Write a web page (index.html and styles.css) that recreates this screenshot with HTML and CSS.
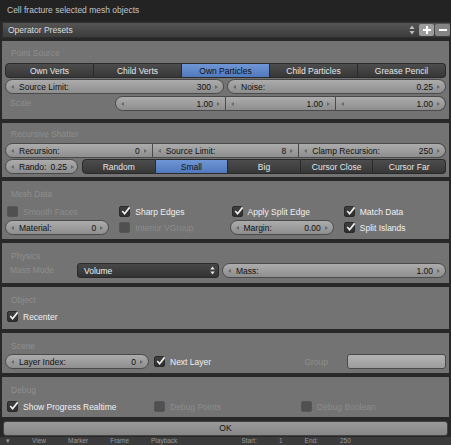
FILE: index.html
```html
<!DOCTYPE html>
<html>
<head>
<meta charset="utf-8">
<link rel="stylesheet" href="styles.css">
</head>
<body>
<div class="title">Cell fracture selected mesh objects</div>
<div class="presets">
  <span class="plbl">Operator Presets</span>
  <svg class="updown" width="6" height="10" viewBox="0 0 6 10"><path d="M3 0.5 L5.5 4 L0.5 4 Z M3 9.5 L5.5 6 L0.5 6 Z" fill="#bdbdbd"/></svg>
  <span class="pbtn plus"><svg width="10" height="10" viewBox="0 0 10 10"><path d="M5 1 V9 M1 5 H9" stroke="#fff" stroke-width="2"/></svg></span>
  <span class="pbtn minus"><svg width="10" height="10" viewBox="0 0 10 10"><path d="M1 5 H9" stroke="#fff" stroke-width="2"/></svg></span>
</div>

<div class="panels">
  <section class="panel p1">
    <div class="ph">Point Source</div>
    <div class="row seg">
      <div class="tb">Own Verts</div>
      <div class="tb">Child Verts</div>
      <div class="tb sel">Own Particles</div>
      <div class="tb">Child Particles</div>
      <div class="tb">Grease Pencil</div>
    </div>
    <div class="row split r2">
      <div class="num"><i class="al"></i><span class="nl">Source Limit:</span><span class="nv">300</span><i class="ar"></i></div>
      <div class="num"><i class="al"></i><span class="nl">Noise:</span><span class="nv">0.25</span><i class="ar"></i></div>
    </div>
    <div class="row r3">
      <div class="lbl scale">Scale</div>
      <div class="grp">
        <div class="num"><i class="al"></i><span class="nv">1.00</span><i class="ar"></i></div>
        <div class="num"><i class="al"></i><span class="nv">1.00</span><i class="ar"></i></div>
        <div class="num"><i class="al"></i><span class="nv">1.00</span><i class="ar"></i></div>
      </div>
    </div>
  </section>

  <section class="panel p2">
    <div class="ph">Recursive Shatter</div>
    <div class="row grp">
      <div class="num"><i class="al"></i><span class="nl">Recursion:</span><span class="nv">0</span><i class="ar"></i></div>
      <div class="num"><i class="al"></i><span class="nl">Source Limit:</span><span class="nv">8</span><i class="ar"></i></div>
      <div class="num"><i class="al"></i><span class="nl">Clamp Recursion:</span><span class="nv">250</span><i class="ar"></i></div>
    </div>
    <div class="row r2b">
      <div class="num rando"><i class="al"></i><span class="nl">Rando:</span><span class="nv rv">0.25</span><span class="fill"></span><i class="ar"></i></div>
      <div class="seg">
        <div class="tb">Random</div>
        <div class="tb sel">Small</div>
        <div class="tb">Big</div>
        <div class="tb">Cursor Close</div>
        <div class="tb">Cursor Far</div>
      </div>
    </div>
  </section>

  <section class="panel p3">
    <div class="ph">Mesh Data</div>
    <div class="row four">
      <div class="cb off"><i class="box"></i><span>Smooth Faces</span></div>
      <div class="cb"><i class="box"><svg viewBox="0 0 12 12"><path d="M2.5 5.5 L5 8.5 L10.5 1.5"/></svg></i><span>Sharp Edges</span></div>
      <div class="cb"><i class="box"><svg viewBox="0 0 12 12"><path d="M2.5 5.5 L5 8.5 L10.5 1.5"/></svg></i><span>Apply Split Edge</span></div>
      <div class="cb"><i class="box"><svg viewBox="0 0 12 12"><path d="M2.5 5.5 L5 8.5 L10.5 1.5"/></svg></i><span>Match Data</span></div>
    </div>
    <div class="row four r2c">
      <div class="num"><i class="al"></i><span class="nl">Material:</span><span class="nv">0</span><i class="ar"></i></div>
      <div class="cb off"><i class="box"></i><span>Interior VGroup</span></div>
      <div class="num"><i class="al"></i><span class="nl">Margin:</span><span class="nv">0.00</span><i class="ar"></i></div>
      <div class="cb"><i class="box"><svg viewBox="0 0 12 12"><path d="M2.5 5.5 L5 8.5 L10.5 1.5"/></svg></i><span>Split Islands</span></div>
    </div>
  </section>

  <section class="panel p4">
    <div class="ph">Physics</div>
    <div class="row split">
      <div class="half">
        <div class="lbl mm">Mass Mode</div>
        <div class="menu"><span>Volume</span><svg width="5" height="9" viewBox="0 0 5 9"><path d="M2.5 0.5 L4.8 3.5 L0.2 3.5 Z M2.5 8.5 L4.8 5.5 L0.2 5.5 Z" fill="#e0e0e0"/></svg></div>
      </div>
      <div class="num"><i class="al"></i><span class="nl">Mass:</span><span class="nv">1.00</span><i class="ar"></i></div>
    </div>
  </section>

  <section class="panel p5">
    <div class="ph">Object</div>
    <div class="row">
      <div class="cb"><i class="box"><svg viewBox="0 0 12 12"><path d="M2.5 5.5 L5 8.5 L10.5 1.5"/></svg></i><span>Recenter</span></div>
    </div>
  </section>

  <section class="panel p6">
    <div class="ph">Scene</div>
    <div class="row three">
      <div class="c3"><div class="num li"><i class="al"></i><span class="nl">Layer Index:</span><span class="nv">0</span><i class="ar"></i></div></div>
      <div class="c3"><div class="cb"><i class="box"><svg viewBox="0 0 12 12"><path d="M2.5 5.5 L5 8.5 L10.5 1.5"/></svg></i><span>Next Layer</span></div></div>
      <div class="c3 grpcol"><span class="lbl glbl">Group</span><div class="txt"></div></div>
    </div>
  </section>

  <section class="panel p7">
    <div class="ph">Debug</div>
    <div class="row three">
      <div class="c3"><div class="cb"><i class="box"><svg viewBox="0 0 12 12"><path d="M2.5 5.5 L5 8.5 L10.5 1.5"/></svg></i><span>Show Progress Realtime</span></div></div>
      <div class="c3"><div class="cb off"><i class="box"></i><span>Debug Points</span></div></div>
      <div class="c3"><div class="cb off"><i class="box"></i><span>Debug Boolean</span></div></div>
    </div>
  </section>
</div>

<div class="ok">OK</div>

<div class="timeline">
  <span class="ti">▾</span><span>View</span><span>Marker</span><span>Frame</span><span>Playback</span>
  <span class="gap"></span><span>Start:</span><span>1</span><span>End:</span><span>250</span>
</div>
</body>
</html>
```

FILE: styles.css
```css
* { box-sizing: border-box; margin: 0; padding: 0; }
html, body { width: 451px; height: 445px; overflow: hidden; }
body {
  background: #282828;
  font-family: "Liberation Sans", Arial, sans-serif;
  font-size: 8.5px;
  color: #e8e8e8;
}

.title {
  height: 21px;
  line-height: 21px;
  padding-left: 7px;
  color: #c4c4c4;
  background: #232323;
}

.presets {
  height: 16px;
  margin: 1px 0 0 2px;
  display: flex;
  align-items: center;
  background: linear-gradient(#555, #3c3c3c);
  border: 1px solid #2e2e2e;
  padding-left: 5px;
  color: #dcdcdc;
}
.plbl { flex: 1; }
.updown { margin-right: 4px; }
.pbtn {
  width: 15px;
  height: 12px;
  display: flex;
  align-items: center;
  justify-content: center;
  border-radius: 2px;
}
.plus { background: #9c9c9c; margin-right: 1px; }
.minus { background: #858585; }

.panels {
  margin: 3px 2px 0;
  display: flex;
  flex-direction: column;
  gap: 4px;
}
.panel {
  background: #737373;
  padding: 0 3px;
}
.ph {
  height: 21px;
  padding: 7px 0 0 6px;
  line-height: 12px;
  color: #8e8e8e;
}
.lbl { color: #8e8e8e; }

.row { display: flex; height: 15px; }

/* panel specific spacing */
.p1 .ph { height: 22px; padding-top: 6px; }
.p1 .r2 { margin-top: 1px; }
.p1 .r3 { margin-top: 2px; }
.p1 { padding-bottom: 8px; }
.p2 .ph { height: 20px; padding-top: 5px; }
.p2 .r2b { margin-top: 1px; }
.p2 { padding-bottom: 3px; }
.p3 .ph { height: 23px; }
.p3 .r2c { margin-top: 1px; }
.p3 { padding-bottom: 4px; }
.p4 .ph { height: 20px; }
.p4 { padding-bottom: 5px; }
.p5 .ph { height: 22px; }
.p5 { padding-bottom: 5px; }
.p6 .ph { height: 21px; }
.p6 { padding-bottom: 4px; }
.p7 .ph { height: 22px; }
.p7 { padding-bottom: 3px; }

/* segmented toggle buttons */
.seg { display: flex; flex: 1; height: 15px; }
.tb {
  flex: 1;
  display: flex;
  align-items: center;
  justify-content: center;
  background: linear-gradient(#4d4d4d, #373737);
  border: 1px solid #2a2a2a;
  border-left: none;
  color: #e6e6e6;
}
.tb:first-child { border-left: 1px solid #2a2a2a; border-radius: 4px 0 0 4px; }
.tb:last-child { border-radius: 0 4px 4px 0; }
.tb.sel { background: linear-gradient(#6f97d6, #5079bd); color: #111; }

/* number fields */
.num {
  flex: 1;
  display: flex;
  align-items: center;
  height: 15px;
  padding: 0 4px;
  background: linear-gradient(#acacac, #8e8e8e);
  border: 1px solid #4a4a4a;
  border-radius: 8px;
  color: #111;
  min-width: 0;
}
.nl { flex: 1; padding-left: 5px; white-space: nowrap; }
.nv { padding-right: 4px; }
.al, .ar { width: 0; height: 0; border-top: 2.5px solid transparent; border-bottom: 2.5px solid transparent; }
.al { border-right: 3px solid #6a6a6a; margin-left: 1px; }
.ar { border-left: 3px solid #6a6a6a; margin-right: 1px; }

.split { gap: 3px; }

.grp { display: flex; flex: 1; }
.grp .num { border-radius: 0; border-left: none; }
.grp .num:first-child { border-left: 1px solid #4a4a4a; border-radius: 8px 0 0 8px; }
.grp .num:last-child { border-radius: 0 8px 8px 0; }
.grp .nv { flex: 1; text-align: right; }
.grp .nl + .nv { flex: none; }

.scale { width: 110px; padding-left: 5px; line-height: 15px; }

.rando { flex: none; width: 73px; margin-right: 4px; }
.rando .nl { flex: none; }
.rando .rv { padding-left: 4px; }
.rando .fill { flex: 1; }

/* checkboxes */
.cb { display: flex; align-items: center; height: 15px; padding-left: 2px; white-space: nowrap; }
.cb .box {
  width: 11px;
  height: 11px;
  border-radius: 2px;
  background: linear-gradient(#3f3f3f, #2f2f2f);
  border: 1px solid #2a2a2a;
  margin-right: 5px;
  position: relative;
}
.cb .box svg {
  position: absolute;
  left: 0;
  top: -1px;
  width: 11px;
  height: 11px;
  fill: none;
  stroke: #f2f2f2;
  stroke-width: 1.8;
}
.cb span { color: #f0f0f0; }
.cb.off .box { background: #505050; border-color: #555; }
.cb.off span { color: #8c8c8c; }

.four { display: grid; grid-template-columns: repeat(4, 1fr); column-gap: 8px; }

.half { flex: 1; display: flex; }
.mm { width: 72px; padding-left: 5px; line-height: 15px; }
.menu {
  flex: 1;
  display: flex;
  align-items: center;
  padding: 0 3px 0 6px;
  background: linear-gradient(#474747, #333);
  border: 1px solid #2a2a2a;
  border-radius: 3px;
  color: #f0f0f0;
}
.menu span { flex: 1; }

.three { display: grid; grid-template-columns: repeat(3, 1fr); }
.c3 { display: flex; min-width: 0; }
.li { margin-right: 3px; }
.grpcol { align-items: center; }
.glbl { width: 48px; text-align: right; padding-right: 19px; }
.txt {
  flex: 1;
  height: 15px;
  background: linear-gradient(#b3b3b3, #9c9c9c);
  border: 1px solid #4a4a4a;
  border-radius: 3px;
}

.ok {
  margin: 4px 3px 0;
  height: 15px;
  line-height: 13px;
  text-align: center;
  background: linear-gradient(#9a9a9a, #878787);
  border: 1px solid #444;
  border-radius: 3px;
  color: #111;
}

.timeline {
  margin-top: 1px;
  height: 8px;
  overflow: hidden;
  display: flex;
  gap: 22px;
  padding-left: 6px;
  background: #3b3b3b;
  color: #9a9a9a;
  font-size: 6.5px;
  line-height: 8px;
}
.timeline .gap { width: 20px; }
```
